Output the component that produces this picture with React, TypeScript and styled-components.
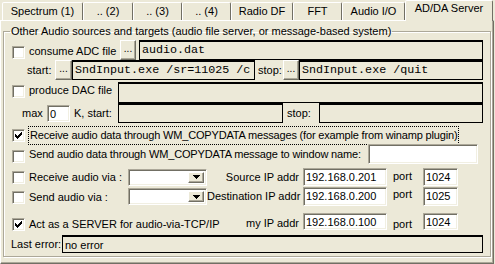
import React from 'react';
import styled, { createGlobalStyle } from 'styled-components';

const Global = createGlobalStyle`
    html, body { margin: 0; padding: 0; background: #ece9d8; }
`;

const Window = styled.div`
    width: 495px;
    height: 264px;
    background: #ece9d8;
    display: flex;
    flex-direction: column;
    overflow: hidden;
    font-family: "Liberation Sans", Arial, sans-serif;
    font-size: 11px;
    line-height: 13px;
    color: #000;
`;

const TabStrip = styled.div`
    display: flex;
    height: 20px;
    padding-left: 2px;
    position: relative;
    z-index: 1;
`;

const Tab = styled.div<{ $w: number; $active?: boolean }>`
    box-sizing: border-box;
    width: ${p => p.$w}px;
    height: ${p => (p.$active ? 21 : 18)}px;
    margin-top: ${p => (p.$active ? 0 : 2)}px;
    padding-top: ${p => (p.$active ? 1 : 2)}px;
    border: 1px solid;
    border-bottom: none;
    border-color: #fff #716f64 transparent #fff;
    border-radius: 2px 2px 0 0;
    background: #ece9d8;
    text-align: center;
    white-space: nowrap;
`;

const Panel = styled.div`
    box-sizing: border-box;
    width: 494px;
    flex: 1;
    border: 1px solid;
    border-color: #fff #716f64 #716f64 #fff;
    box-shadow: inset -1px -1px 0 #aca899;
    padding: 4px 2px 0 2px;
`;

const Group = styled.fieldset`
    box-sizing: border-box;
    width: 488px;
    height: 232px;
    margin: 0;
    padding: 0;
    border: 1px solid #aca899;
    box-shadow: inset 1px 1px 0 #fff, 1px 1px 0 #fff;
    display: flex;
    flex-direction: column;
`;

const Legend = styled.legend`
    padding: 0 1px;
    margin-left: 6px;
    line-height: 13px;
`;

const Row = styled.div<{ $h: number; $mt?: number }>`
    display: flex;
    align-items: center;
    height: ${p => p.$h}px;
    margin-top: ${p => p.$mt ?? 0}px;
    flex-shrink: 0;
`;

const Label = styled.span<{ $w: number; $ml?: number; $right?: boolean; $dy?: number; $tight?: boolean }>`
    width: ${p => p.$w}px;
    margin-left: ${p => p.$ml ?? 0}px;
    text-align: ${p => (p.$right ? 'right' : 'left')};
    white-space: nowrap;
    flex-shrink: 0;
    position: relative;
    top: ${p => p.$dy ?? 0}px;
    letter-spacing: ${p => (p.$tight ? '-0.15px' : 'normal')};
`;

const Box = styled.span<{ $ml?: number; $dy?: number }>`
    box-sizing: border-box;
    width: 13px;
    height: 13px;
    margin-left: ${p => p.$ml ?? 8}px;
    flex-shrink: 0;
    background: #fff;
    border: 1px solid;
    border-color: #aca899 #fff #fff #aca899;
    box-shadow: inset 1px 1px 0 #716f64, inset -1px -1px 0 #f1efe2;
    display: flex;
    align-items: center;
    justify-content: center;
    position: relative;
    top: ${p => p.$dy ?? 0}px;
`;

const Check = ({ checked, dy }: { checked?: boolean; dy?: number }) => (
    <Box $dy={dy}>
        {checked && (
            <svg width="7" height="7" viewBox="0 0 7 7">
                <path d="M0 2h1v1h1v1h1V3h1V2h1V1h1V0h1v3H6v1H5v1H4v1H3v1H2V6H1V5H0z" fill="#000" />
            </svg>
        )}
    </Box>
);

const DotButton = styled.span<{ $w?: number; $ml?: number }>`
    box-sizing: border-box;
    width: ${p => p.$w ?? 16}px;
    height: 20px;
    margin-left: ${p => p.$ml ?? 0}px;
    flex-shrink: 0;
    border: 1px solid;
    border-color: #fff #716f64 #716f64 #fff;
    box-shadow: inset -1px -1px 0 #aca899;
    background: #ece9d8;
    display: flex;
    align-items: flex-end;
    justify-content: center;
    padding-bottom: 4px;
    font-size: 10px;
`;

const ReadOnly = styled.span<{ $w: number; $h?: number; $ml?: number; $mono?: boolean }>`
    box-sizing: border-box;
    width: ${p => p.$w}px;
    height: ${p => p.$h ?? 20}px;
    margin-left: ${p => p.$ml ?? 0}px;
    flex-shrink: 0;
    border: 1px solid #000;
    border-top-width: 2px;
    background: #ece9d8;
    padding: 1px 0 0 2px;
    overflow: hidden;
    white-space: nowrap;
    align-self: flex-start;
    font-family: ${p => (p.$mono ? '"Liberation Mono", "Courier New", monospace' : 'inherit')};
    font-size: ${p => (p.$mono ? '11.7px' : '11px')};
    line-height: 14px;
`;

const Sunken = styled.span<{ $w: number; $h?: number; $ml?: number }>`
    box-sizing: border-box;
    width: ${p => p.$w}px;
    height: ${p => p.$h ?? 20}px;
    margin-left: ${p => p.$ml ?? 0}px;
    flex-shrink: 0;
    background: #fff;
    border: 1px solid;
    border-color: #aca899 #fff #fff #aca899;
    box-shadow: inset 1px 1px 0 #716f64, inset -1px -1px 0 #f1efe2;
    padding: 2px 0 0 2px;
    white-space: nowrap;
    overflow: hidden;
`;

const Combo = styled.span<{ $ml?: number }>`
    box-sizing: border-box;
    width: 79px;
    height: 17px;
    margin-left: ${p => p.$ml ?? 0}px;
    flex-shrink: 0;
    background: #fff;
    border: 1px solid;
    border-color: #aca899 #fff #fff #aca899;
    box-shadow: inset 1px 1px 0 #716f64, inset -1px -1px 0 #f1efe2;
    display: flex;
    justify-content: flex-end;
    padding: 2px 2px 2px 0;
`;

const DropButton = styled.span`
    box-sizing: border-box;
    width: 16px;
    height: 100%;
    background: #ece9d8;
    border: 1px solid;
    border-color: #fff #716f64 #716f64 #fff;
    box-shadow: inset -1px -1px 0 #aca899;
    display: flex;
    align-items: center;
    justify-content: center;
`;

const Focus = styled.span`
    margin-left: 3px;
    padding: 2px 1px 2px 1px;
    border: 1px dotted #000;
    white-space: nowrap;
    letter-spacing: -0.17px;
`;

const Arrow = () => (
    <svg width="7" height="4" viewBox="0 0 7 4">
        <path d="M0 0h7v1H6v1H5v1H4v1H3V3H2V2H1V1H0z" fill="#000" />
    </svg>
);

const tabs: [string, number][] = [
    ['Spectrum (1)', 81],
    ['.. (2)', 50],
    ['.. (3)', 49],
    ['.. (4)', 49],
    ['Radio DF', 62],
    ['FFT', 49],
    ['Audio I/O', 63],
];

const App = () => {
    return (
        <Window>
            <Global />
            <TabStrip>
                {tabs.map(([t, w]) => (
                    <Tab key={t} $w={w}>{t}</Tab>
                ))}
                <Tab $w={88} $active>AD/DA Server</Tab>
            </TabStrip>
            <Panel>
                <Group>
                    <Legend>Other Audio sources and targets (audio file server, or message-based system)</Legend>

                    <Row $h={20} $mt={2}>
                        <Check dy={2} />
                        <Label $w={91} $ml={4} $dy={1}>consume ADC file</Label>
                        <DotButton>...</DotButton>
                        <ReadOnly $w={344} $ml={3} $mono>audio.dat</ReadOnly>
                    </Row>

                    <Row $h={20}>
                        <Label $w={28} $ml={23}>start:</Label>
                        <DotButton $w={17}>...</DotButton>
                        <ReadOnly $w={183} $mono>SndInput.exe /sr=11025 /c</ReadOnly>
                        <Label $w={25} $ml={3}>stop:</Label>
                        <DotButton>...</DotButton>
                        <ReadOnly $w={184} $mono>SndInput.exe /quit</ReadOnly>
                    </Row>

                    <Row $h={21} $mt={2}>
                        <Check dy={-1} />
                        <Label $w={89} $ml={4} $dy={-2}>produce DAC file</Label>
                        <ReadOnly $w={365} $h={21} />
                    </Row>

                    <Row $h={20}>
                        <Label $w={25} $ml={18}>max</Label>
                        <Sunken $w={23} $h={17}>0</Sunken>
                        <Label $w={44} $ml={4}>K, start:</Label>
                        <ReadOnly $w={165} />
                        <Label $w={32} $ml={4}>stop:</Label>
                        <ReadOnly $w={164} />
                    </Row>

                    <Row $h={17} $mt={4}>
                        <Check checked />
                        <Focus>Receive audio data through WM_COPYDATA messages (for example from winamp plugin)</Focus>
                    </Row>

                    <Row $h={20}>
                        <Check dy={2} />
                        <Label $w={339} $ml={4} $tight>Send audio data through WM_COPYDATA message to window name:</Label>
                        <Sunken $w={110} />
                    </Row>

                    <Row $h={18} $mt={4}>
                        <Check />
                        <Label $w={99} $ml={4}>Receive audio via :</Label>
                        <Combo><DropButton><Arrow /></DropButton></Combo>
                        <Label $w={92} $right>Source IP addr</Label>
                        <Sunken $w={84} $h={18} $ml={4}>192.168.0.201</Sunken>
                        <Label $w={30} $ml={6} $dy={-1}>port</Label>
                        <Sunken $w={35} $h={18}>1024</Sunken>
                    </Row>

                    <Row $h={19} $mt={1}>
                        <Check dy={1} />
                        <Label $w={99} $ml={4} $dy={1}>Send audio via :</Label>
                        <Combo><DropButton><Arrow /></DropButton></Combo>
                        <Label $w={92} $right>Destination IP addr</Label>
                        <Sunken $w={84} $h={19} $ml={4}>192.168.0.200</Sunken>
                        <Label $w={30} $ml={6} $dy={-2}>port</Label>
                        <Sunken $w={35} $h={19}>1025</Sunken>
                    </Row>

                    <Row $h={18} $mt={6}>
                        <Check checked dy={3} />
                        <Label $w={178} $ml={4} $dy={3}>Act as a SERVER for audio-via-TCP/IP</Label>
                        <Label $w={92} $right $dy={2}>my IP addr</Label>
                        <Sunken $w={84} $h={17} $ml={4}>192.168.0.100</Sunken>
                        <Label $w={30} $ml={6} $dy={3}>port</Label>
                        <Sunken $w={35} $h={17}>1024</Sunken>
                    </Row>

                    <Row $h={18} $mt={5}>
                        <Label $w={51} $ml={7}>Last error:</Label>
                        <ReadOnly $w={421} $h={18}>no error</ReadOnly>
                    </Row>
                </Group>
            </Panel>
        </Window>
    );
};

export default App;
